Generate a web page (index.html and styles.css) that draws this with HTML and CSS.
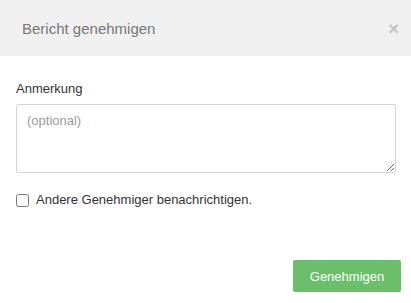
FILE: index.html
```html
<!DOCTYPE html>
<html>
<head>
  <title>Bericht genehmigen</title>
  <link rel="stylesheet" href="styles.css">
</head>
<body>
  <div class="modal">
    <div class="modal-header">
      <h4 class="modal-title">Bericht genehmigen</h4>
      <button class="close" type="button">&times;</button>
    </div>

    <div class="modal-body">
      <label class="field-label" for="note">Anmerkung</label>
      <textarea id="note" class="field-input" placeholder="(optional)"></textarea>

      <label class="check">
        <input type="checkbox" id="notify">
        <span>Andere Genehmiger benachrichtigen.</span>
      </label>
    </div>

    <div class="modal-footer">
      <button class="btn-approve" type="button">Genehmigen</button>
    </div>
  </div>
</body>
</html>
```

FILE: styles.css
```css
body {
  font-family: "Liberation Sans", Arial, sans-serif;
  margin: 0;
  padding: 0;
  background: #fff;
  color: #333;
}
.modal {
  width: 411px;
}
.modal-header {
  height: 56px;
  background-color: #f0f0f0;
  display: flex;
  align-items: center;
  justify-content: space-between;
  padding: 0 12px 0 22px;
  box-sizing: border-box;
}
.modal-title {
  margin: 0;
  font-size: 15px;
  font-weight: normal;
  color: #777;
}
.close {
  border: none;
  background: none;
  padding: 0;
  font-family: "Liberation Sans", Arial, sans-serif;
  font-size: 19px;
  font-weight: bold;
  line-height: 1;
  color: #c4c4c4;
  cursor: pointer;
}
.modal-body {
  padding: 24px 15px 0 16px;
}
.field-label {
  display: block;
  font-size: 13px;
  line-height: 18px;
  margin-bottom: 6px;
}
.field-input {
  display: block;
  width: 380px;
  height: 69px;
  box-sizing: border-box;
  padding: 8px 10px;
  border: 1px solid #d5d5d5;
  border-radius: 2px;
  font-family: "Liberation Sans", Arial, sans-serif;
  font-size: 13px;
  color: #333;
  resize: vertical;
}
.field-input::placeholder {
  color: #9a9a9a;
}
.check {
  display: flex;
  align-items: center;
  margin-top: 18px;
  font-size: 13px;
  line-height: 18px;
}
.check input {
  width: 13px;
  height: 13px;
  margin: 0 7px 0 0;
}
.modal-footer {
  display: flex;
  justify-content: flex-end;
  padding: 51px 10px 0 0;
}
.btn-approve {
  width: 108px;
  height: 32px;
  background-color: #6bbf6b;
  color: #fff;
  border: none;
  border-radius: 2px;
  font-family: "Liberation Sans", Arial, sans-serif;
  font-size: 13px;
  cursor: pointer;
}
```
